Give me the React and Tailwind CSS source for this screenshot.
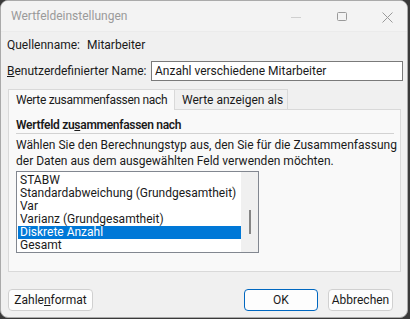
import React from "react";

// Wertfeldeinstellungen — Excel pivot value field settings dialog (inactive window)

const ITEMS = [
  "STABW",
  "Standardabweichung (Grundgesamtheit)",
  "Var",
  "Varianz (Grundgesamtheit)",
  "Diskrete Anzahl",
  "Gesamt",
];

function TitleBar() {
  return (
    <div className="flex h-[31px] shrink-0 items-center border-b border-[#ebebeb] bg-[#f3f3f3] pl-[10px] text-[12px] text-[#9a9a9a]">
      <span className="flex-1">Wertfeldeinstellungen</span>
      {/* window controls */}
      <svg width="118" height="30" viewBox="0 0 118 30" className="shrink-0">
        <line x1="2" y1="16.5" x2="12" y2="16.5" stroke="#cfcfcf" strokeWidth="1" />
        <rect x="48.5" y="11.5" width="9" height="8" rx="1" fill="none" stroke="#9a9a9a" strokeWidth="1" />
        <path d="M93.5 11.5 L103.5 21.5 M103.5 11.5 L93.5 21.5" stroke="#9a9a9a" strokeWidth="1" />
      </svg>
    </div>
  );
}

function Button({ children, primary, className = "" }) {
  return (
    <div
      className={`flex h-[22px] items-center justify-center rounded-[4px] border bg-[#fdfdfd] text-[12px] text-[#1a1a1a] ${
        primary ? "border-[#0067c0]" : "border-[#d0d0d0]"
      } ${className}`}
    >
      {children}
    </div>
  );
}

export default function App() {
  return (
    <div className="h-[319px] w-[410px] bg-[#3a3a3a]" style={{ fontFamily: "Roboto, Arial, sans-serif" }}>
      <div className="flex h-[318px] w-[408px] flex-col overflow-hidden whitespace-nowrap rounded-lg border border-[#aaaaaa] bg-[#f0f0f0]">
        <TitleBar />

        <div className="flex flex-1 flex-col px-[6px] pt-[4px] text-[12px] text-[#1a1a1a]">
          {/* Source name */}
          <div className="flex h-[18px] items-center">
            <span className="w-[80px]">Quellenname:</span>
            <span>Mitarbeiter</span>
          </div>

          {/* Custom name */}
          <div className="mt-[7px] flex h-[20px] items-center">
            <span className="w-[144px]">
              <span className="underline">B</span>enutzerdefinierter Name:
            </span>
            <div className="mr-[-2px] flex h-[20px] flex-1 items-center border border-[#7a7a7a] bg-white pl-[3px]">
              Anzahl verschiedene Mitarbeiter
            </div>
          </div>

          {/* Tabs */}
          <div className="mt-[8px] flex items-end pl-px">
            <div className="relative z-10 -mb-px flex h-[21px] w-[167px] items-center border border-b-0 border-[#d9d9d9] bg-[#f9f9f9] pl-[7px] tracking-[-0.3px]">
              Werte zusammenfassen nach
            </div>
            <div className="flex h-[20px] w-[113px] items-center border border-b-0 border-l-0 border-[#d9d9d9] bg-[#f0f0f0] pl-[7px]">
              Werte anzeigen als
            </div>
          </div>

          {/* Tab panel */}
          <div className="ml-px flex h-[163px] w-[393px] flex-col border border-[#d9d9d9] bg-[#f9f9f9] pl-[7px] pt-[7px]">
            <div className="h-[16px] font-semibold leading-[16px] tracking-[-0.3px]">
              Wertfeld zu<span className="underline">s</span>ammenfassen nach
            </div>
            <div className="h-px w-[378px] bg-[#d2d2d2]" />
            <div className="mt-[3px] leading-[16px]">
              Wählen Sie den Berechnungstyp aus, den Sie für die Zusammenfassung
              <br />
              der Daten aus dem ausgewählten Feld verwenden möchten.
            </div>

            {/* List box */}
            <div className="mt-[2px] flex h-[82px] w-[243px] overflow-hidden border border-[#828790] bg-white">
              <div className="flex flex-1 flex-col pl-px pt-[2px]">
                {ITEMS.map((item) => (
                  <div
                    key={item}
                    className={`h-[13px] shrink-0 pl-[2px] leading-[13px] ${
                      item === "Diskrete Anzahl" ? "bg-[#0078d7] text-white" : ""
                    }`}
                  >
                    {item}
                  </div>
                ))}
              </div>
              {/* scrollbar */}
              <div className="flex w-[17px] justify-center bg-[#f0f0f0] pt-[38px]">
                <div className="h-[24px] w-[2px] bg-[#858585]" />
              </div>
            </div>
          </div>

          {/* Footer buttons */}
          <div className="mt-[17px] flex items-center pl-px">
            <Button className="w-[85px]">
              Zahle<span className="underline">n</span>format
            </Button>
            <div className="flex-1" />
            <Button primary className="w-[74px]">OK</Button>
            <Button className="ml-[10px] mr-[8px] w-[65px]">Abbrechen</Button>
          </div>
        </div>
      </div>
    </div>
  );
}
